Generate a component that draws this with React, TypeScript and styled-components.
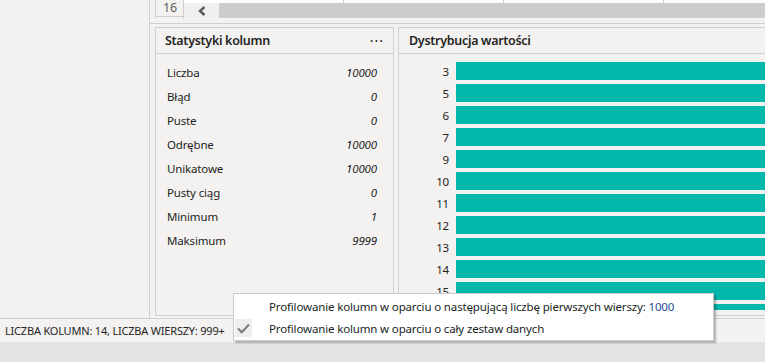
import React from "react";
import styled, { createGlobalStyle } from "styled-components";

const GlobalStyle = createGlobalStyle`
  html, body {
    margin: 0;
    padding: 0;
    background: #f3f2f1;
  }
  body {
    font-family: "Segoe UI", "Noto Sans", "Liberation Sans", sans-serif;
    color: #252423;
    letter-spacing: -0.15px;
  }
`;

const stats = [
  { label: "Liczba", value: "10000" },
  { label: "Błąd", value: "0" },
  { label: "Puste", value: "0" },
  { label: "Odrębne", value: "10000" },
  { label: "Unikatowe", value: "10000" },
  { label: "Pusty ciąg", value: "0" },
  { label: "Minimum", value: "1" },
  { label: "Maksimum", value: "9999" },
];

const buckets = ["3", "5", "6", "7", "9", "10", "11", "12", "13", "14", "15", "16"];

const Frame = styled.div`
  position: relative;
  width: 765px;
  height: 362px;
  overflow: hidden;
  display: flex;
  flex-direction: column;
`;

const Workspace = styled.div`
  display: flex;
  height: 318px;
  border-bottom: 1px solid #d2d0ce;
`;

const Gutter = styled.div`
  width: 149px;
  flex-shrink: 0;
  border-right: 1px solid #d2d0ce;
`;

const Main = styled.div`
  flex: 1;
  min-width: 0;
  display: flex;
  flex-direction: column;
  overflow: hidden;
`;

const GridStrip = styled.div`
  display: flex;
  height: 24px;
  padding-left: 5px;
  border-bottom: 1px solid #d2d0ce;
  box-sizing: border-box;
`;

const RowHead = styled.div`
  width: 27px;
  height: 19px;
  flex-shrink: 0;
  border-left: 1px solid #d2d0ce;
  border-right: 1px solid #d2d0ce;
  display: flex;
  flex-direction: column;
`;

const RowNum = styled.div`
  height: 16px;
  border-bottom: 1px solid #d2d0ce;
  font-size: 12.5px;
  line-height: 15px;
  color: #605e5c;
  padding-left: 7px;
`;

const ScrollColumn = styled.div`
  flex: 1;
  min-width: 0;
  display: flex;
  flex-direction: column;
  height: 18px;
`;

const CellStrip = styled.div`
  height: 3px;
  background: #ffffff;
  display: flex;
`;

const CellFrag = styled.div<{ $w: number }>`
  width: ${(p) => p.$w}px;
  flex-shrink: 0;
  border-right: 1px solid #d2d0ce;
`;

const ScrollBar = styled.div`
  flex: 1;
  display: flex;
  background: #f0f0f0;
`;

const ArrowBtn = styled.div`
  width: 35px;
  display: flex;
  align-items: center;
  justify-content: center;
`;

const Thumb = styled.div`
  flex: 1;
  background: #cdcdcd;
`;

const Panels = styled.div`
  display: flex;
  gap: 4px;
  padding: 3px 0 0 5px;
  height: 289px;
`;

const Panel = styled.section<{ $grow?: boolean }>`
  display: flex;
  flex-direction: column;
  border: 1px solid #d2d0ce;
  ${(p) => (p.$grow ? "flex: 1; border-right: none;" : "width: 239px;")}
  height: 289px;
  box-sizing: border-box;
  flex-shrink: 0;
  overflow: hidden;
`;

const PanelHeader = styled.header<{ $pad: number }>`
  height: 25px;
  flex-shrink: 0;
  border-bottom: 1px solid #d2d0ce;
  display: flex;
  align-items: center;
  justify-content: space-between;
  padding: 0 9px 0 ${(p) => p.$pad}px;
`;

const PanelTitle = styled.h2`
  margin: 0;
  font-size: 12.5px;
  font-weight: 600;
  letter-spacing: -0.3px;
  color: #252423;
`;

const Dots = styled.span`
  font-size: 14px;
  letter-spacing: 1px;
  color: #252423;
  line-height: 10px;
  margin-top: -8px;
`;

const StatList = styled.dl`
  margin: 0;
  padding: 6px 16px 0 11px;
`;

const StatRow = styled.div`
  display: flex;
  justify-content: space-between;
  height: 24px;
  align-items: center;
  font-size: 11.5px;
`;

const StatLabel = styled.dt`
  color: #252423;
`;

const StatValue = styled.dd`
  margin: 0;
  font-style: italic;
  color: #252423;
`;

const Chart = styled.div`
  flex: 1;
  margin-bottom: 5px;
  padding-top: 8px;
  overflow: hidden;
  display: flex;
  flex-direction: column;
  gap: 4px;
`;

const BarRow = styled.div`
  display: flex;
  align-items: center;
  height: 18px;
  flex-shrink: 0;
  gap: 7px;
`;

const BarLabel = styled.span`
  width: 50px;
  text-align: right;
  font-size: 11.5px;
  color: #252423;
`;

const Bar = styled.div`
  flex: 1;
  height: 18px;
  background: #01b8aa;
`;

const StatusBar = styled.footer`
  height: 23px;
  display: flex;
  align-items: center;
  padding-left: 5px;
  font-size: 11px;
  letter-spacing: -0.2px;
  color: #252423;
`;

const BottomBand = styled.div`
  flex: 1;
  background: #e3e3e3;
`;

const Menu = styled.ul`
  position: absolute;
  left: 233px;
  top: 293px;
  width: 479px;
  margin: 0;
  padding: 1px 0;
  list-style: none;
  background: #ffffff;
  border: 1px solid #cccccc;
  box-shadow: 2px 2px 2px rgba(0, 0, 0, 0.28);
`;

const MenuItem = styled.li`
  display: flex;
  align-items: center;
  height: 22px;
  font-size: 11.5px;
  color: #201f1e;
`;

const CheckSlot = styled.span<{ $on?: boolean }>`
  width: 17px;
  height: 18px;
  margin: 0 17px 0 1px;
  display: flex;
  align-items: center;
  justify-content: center;
  background: ${(p) => (p.$on ? "#eeeeee" : "transparent")};
`;

const Accent = styled.span`
  color: #1f4e9c;
`;

export default function App() {
  return (
    <Frame>
      <GlobalStyle />
      <Workspace>
        <Gutter />
        <Main>
          <GridStrip>
            <RowHead>
              <RowNum>16</RowNum>
            </RowHead>
            <ScrollColumn>
              <CellStrip>
                <CellFrag $w={159} />
                <CellFrag $w={159} />
                <CellFrag $w={159} />
              </CellStrip>
              <ScrollBar>
                <ArrowBtn>
                  <svg width="10" height="10" viewBox="0 0 10 10">
                    <path d="M7.5 1 L3 5 L7.5 9" fill="none" stroke="#5c5c5c" strokeWidth="2.4" />
                  </svg>
                </ArrowBtn>
                <Thumb />
              </ScrollBar>
            </ScrollColumn>
          </GridStrip>
          <Panels>
            <Panel>
              <PanelHeader $pad={9}>
                <PanelTitle>Statystyki kolumn</PanelTitle>
                <Dots>...</Dots>
              </PanelHeader>
              <StatList>
                {stats.map((s) => (
                  <StatRow key={s.label}>
                    <StatLabel>{s.label}</StatLabel>
                    <StatValue>{s.value}</StatValue>
                  </StatRow>
                ))}
              </StatList>
            </Panel>
            <Panel $grow>
              <PanelHeader $pad={10}>
                <PanelTitle>Dystrybucja wartości</PanelTitle>
              </PanelHeader>
              <Chart>
                {buckets.map((b) => (
                  <BarRow key={b}>
                    <BarLabel>{b}</BarLabel>
                    <Bar />
                  </BarRow>
                ))}
              </Chart>
            </Panel>
          </Panels>
        </Main>
      </Workspace>
      <StatusBar>LICZBA KOLUMN: 14, LICZBA WIERSZY: 999+</StatusBar>
      <BottomBand />
      <Menu>
        <MenuItem>
          <CheckSlot />
          Profilowanie kolumn w oparciu o następującą liczbę pierwszych wierszy:&nbsp;<Accent>1000</Accent>
        </MenuItem>
        <MenuItem>
          <CheckSlot $on>
            <svg width="13" height="11" viewBox="0 0 13 11">
              <path d="M1 5.5 L4.8 9.2 L12 1.5" fill="none" stroke="#7a7a7a" strokeWidth="2" />
            </svg>
          </CheckSlot>
          Profilowanie kolumn w oparciu o cały zestaw danych
        </MenuItem>
      </Menu>
    </Frame>
  );
}
